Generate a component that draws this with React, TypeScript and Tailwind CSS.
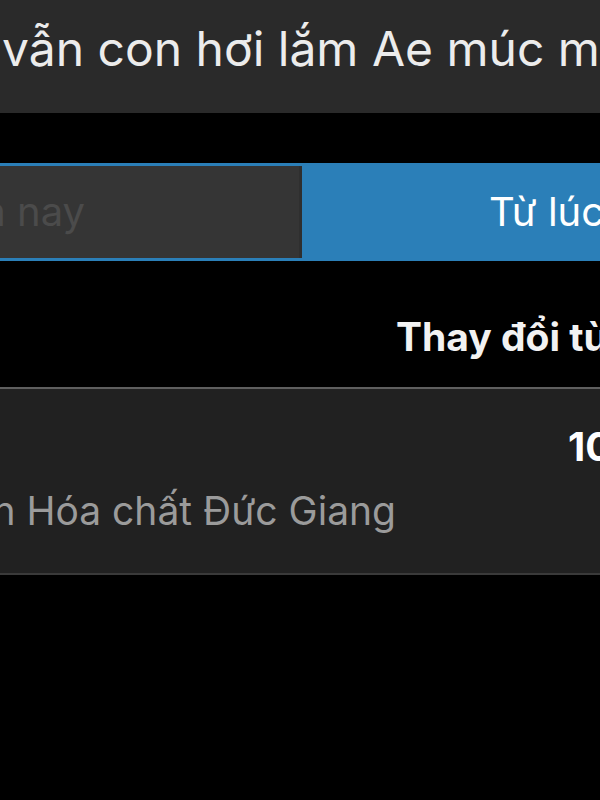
export default function App() {
  return (
    <div className="w-[600px] h-[800px] overflow-hidden bg-black font-['Inter',sans-serif]">
      <div className="h-[113px] bg-[#2a2a2a] pt-[25px] pl-[2px]">
        <p className="whitespace-nowrap text-[48px] leading-[48px] text-[#ececec]">
          vẫn con hơi lắm Ae múc mạnh đi nhé
        </p>
      </div>

      <div className="mt-[50px] flex h-[98px] border-y-[3px] border-[#2b7fb8]">
        <div className="flex w-[302px] shrink-0 items-center justify-end overflow-hidden border-r-[3px] border-[#2f2f2f] bg-[#353535] pr-[214px]">
          <span className="whitespace-nowrap text-[40px] leading-[40px] text-[#4b4b4b]">Hôm nay</span>
        </div>
        <div className="flex flex-1 items-center overflow-hidden bg-[#2b7fb8] pl-[187px]">
          <span className="whitespace-nowrap text-[40px] leading-[40px] text-white">Từ lúc đầu</span>
        </div>
      </div>

      <div className="mt-[56px] h-[70px] pl-[396px]">
        <p className="whitespace-nowrap text-[39px] font-bold leading-[39px] text-[#f2f2f2]">Thay đổi từ</p>
      </div>

      <div className="h-[188px] border-y-2 border-t-[#5f5f5f] border-b-[#3a3a3a] bg-[#212121]">
        <div className="flex pt-[38px] pl-[568px]">
          <span className="whitespace-nowrap text-[40px] font-bold leading-[40px] text-white">10,5%</span>
        </div>
        <div className="mt-[24px] flex w-[396px] justify-end">
          <span className="whitespace-nowrap text-[39px] leading-[39px] text-[#9b9b9b]">Công ty Cổ phần Hóa chất Đức Giang</span>
        </div>
      </div>
    </div>
  );
}
